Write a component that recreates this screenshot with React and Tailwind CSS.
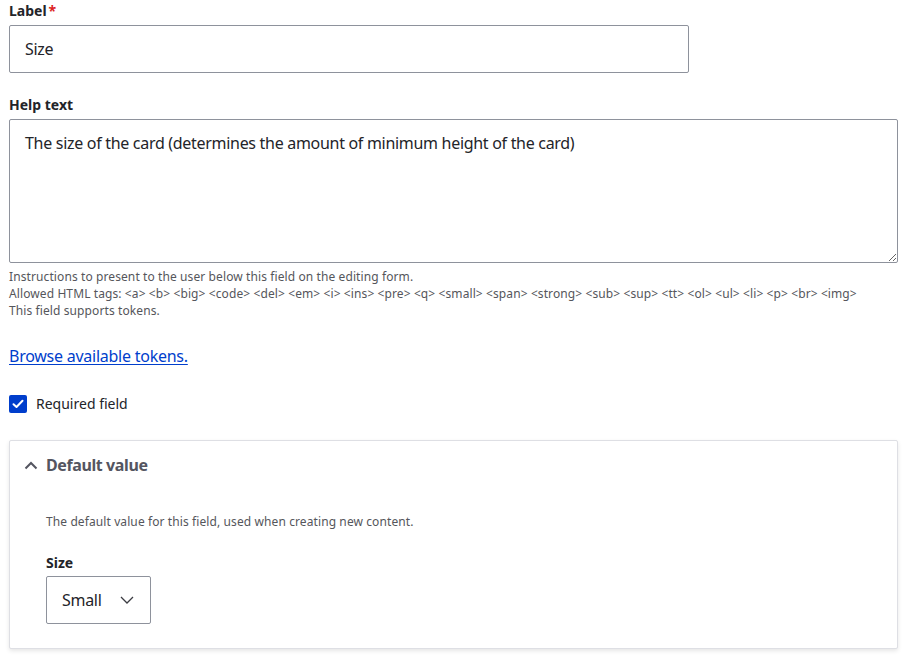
import React from "react";

const font = { fontFamily: '"Noto Sans", "Open Sans", sans-serif' };

const Label = ({ children, required, className = "" }) => (
  <div className={`h-[18px] text-[14px] leading-[18px] font-bold text-[#232429] ${className}`}>
    {children}
    {required && <span className="ml-[2px] text-[#dc2323]">*</span>}
  </div>
);

const Description = ({ children, className = "" }) => (
  <div className={`text-[12px] leading-[17px] tracking-[0.1px] text-[#55565b] ${className}`}>{children}</div>
);

export default function App() {
  return (
    <div className="bg-white px-[9px] text-[#232429]" style={font}>
      {/* LABEL */}
      <Label required className="mt-[2px]">
        Label
      </Label>
      <input
        defaultValue="Size"
        className="mt-[5px] box-border block h-[48px] w-[680px] rounded-[2px] border border-[#8e929c] bg-white px-[15px] text-[16px] tracking-[-0.3px] text-[#232429] outline-none"
      />

      {/* HELP TEXT */}
      <Label className="mt-[23px]">Help text</Label>
      <textarea
        defaultValue="The size of the card (determines the amount of minimum height of the card)"
        className="mt-[5px] box-border block h-[144px] w-full rounded-[2px] border border-[#8e929c] bg-white px-[15px] pt-[11px] pb-[12px] text-[16px] leading-[24px] tracking-[-0.3px] text-[#232429] outline-none"
      />
      <Description className="mt-[5px]">
        <div>Instructions to present to the user below this field on the editing form.</div>
        <div>
          {"Allowed HTML tags: <a> <b> <big> <code> <del> <em> <i> <ins> <pre> <q> <small> <span> <strong> <sub> <sup> <tt> <ol> <ul> <li> <p> <br> <img>"}
        </div>
        <div>This field supports tokens.</div>
      </Description>

      <div className="mt-[25px] h-[24px] text-[16px] leading-[24px] tracking-[-0.25px]">
        <a href="#" className="text-[#003ecc] underline underline-offset-2">
          Browse available tokens.
        </a>
      </div>

      {/* REQUIRED */}
      <div className="mt-[27px] flex h-[18px] items-center gap-[9px]">
        <span className="flex h-[18px] w-[18px] items-center justify-center rounded-[2px] bg-[#003ecc]">
          <svg width="12" height="10" viewBox="0 0 12 10" fill="none">
            <path d="M1.5 5.2 4.5 8 10.5 1.8" stroke="white" strokeWidth="2" strokeLinecap="round" strokeLinejoin="round" />
          </svg>
        </span>
        <span className="text-[14px] leading-[18px]">Required field</span>
      </div>

      {/* DEFAULT VALUE */}
      <div className="mt-[27px] mb-[10px] rounded-[2px] border border-[#dedfe4] bg-white pt-[12px] pb-[24px] shadow-[0_2px_4px_rgba(0,0,0,0.1)]">
        <div className="flex h-[24px] items-center pl-[14px]">
          <svg width="14" height="9" viewBox="0 0 14 9" fill="none">
            <path d="M1.5 7.5 7 2l5.5 5.5" stroke="#545560" strokeWidth="2" />
          </svg>
          <span className="ml-[8px] text-[16px] font-bold leading-[24px] tracking-[-0.4px] text-[#545560]">Default value</span>
        </div>
        <div className="pl-[36px]">
          <Description className="mt-[36px]">The default value for this field, used when creating new content.</Description>
          <Label className="mt-[24px]">Size</Label>
          <div className="mt-[4px] box-border flex h-[48px] w-[105px] items-center justify-between rounded-[2px] border border-[#8e929c] pl-[15px] pr-[16px] text-[16px] tracking-[-0.3px]">
            <span>Small</span>
            <svg width="14" height="8" viewBox="0 0 14 8" fill="none">
              <path d="M1 1l6 6 6-6" stroke="#3b3c42" strokeWidth="1.3" />
            </svg>
          </div>
        </div>
      </div>
    </div>
  );
}
